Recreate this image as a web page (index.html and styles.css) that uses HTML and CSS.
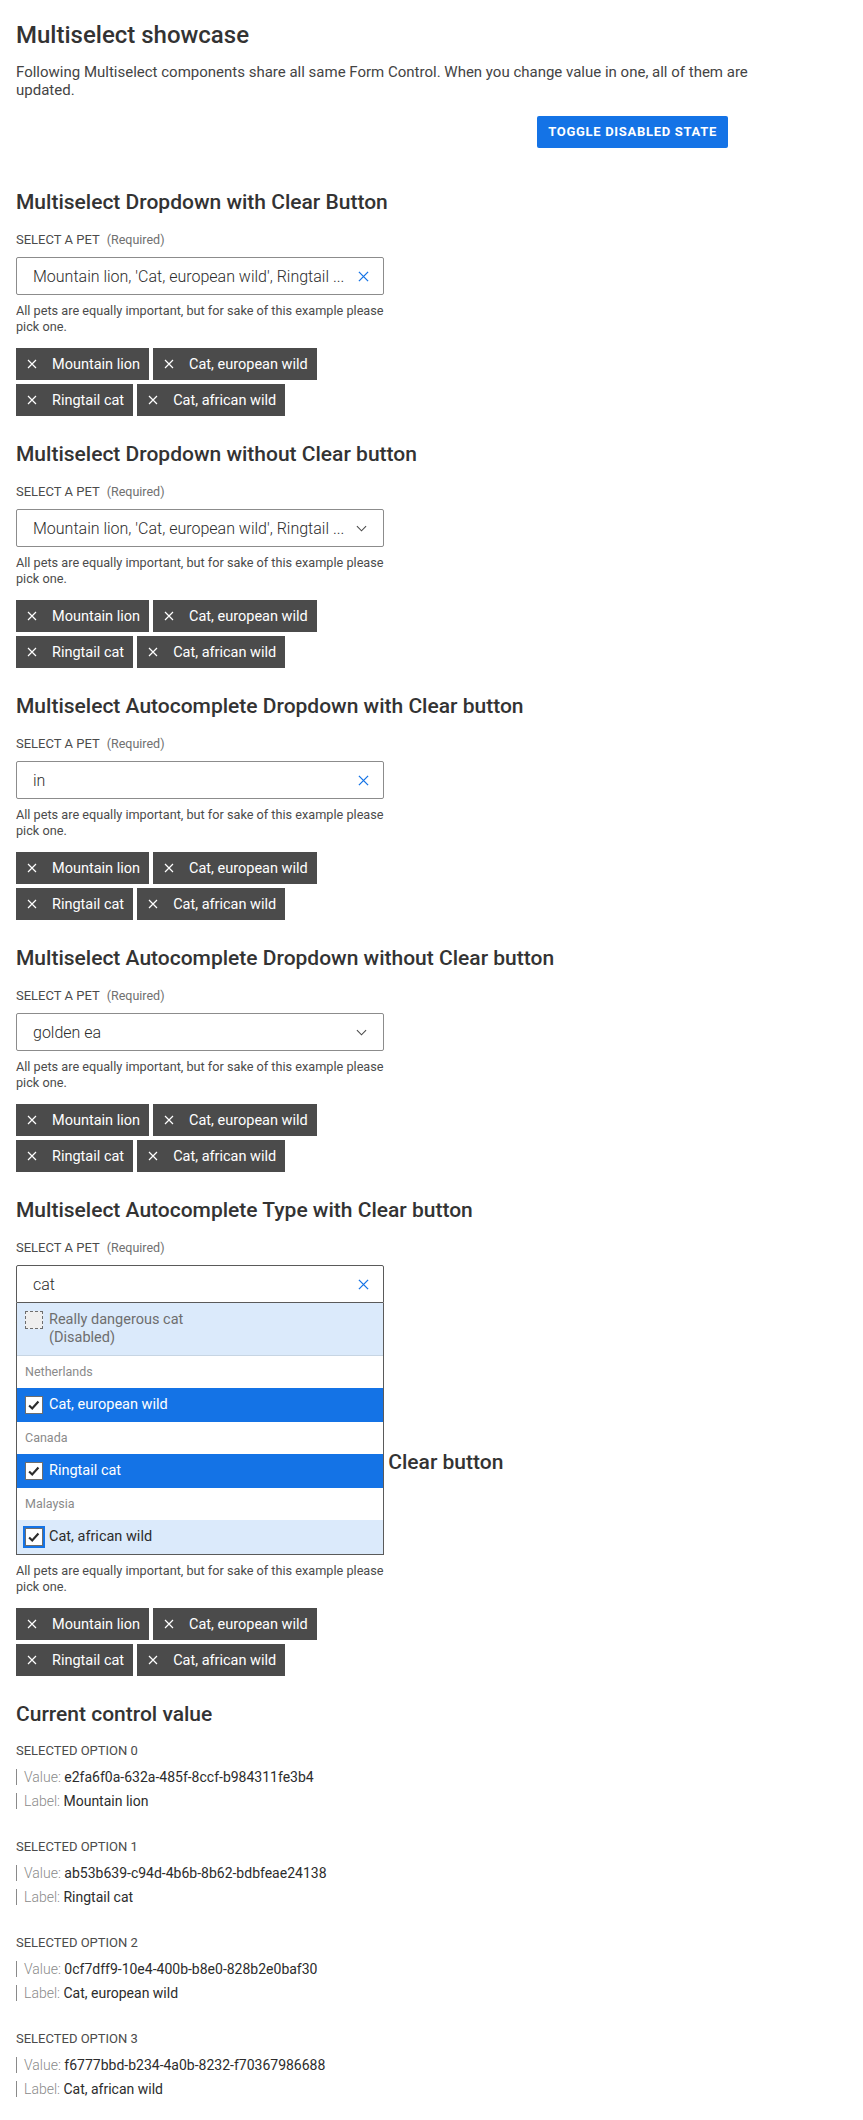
FILE: index.html
```html
<!DOCTYPE html>
<html lang="en">
<head>
<meta charset="utf-8">
<title>Multiselect showcase</title>
<link rel="stylesheet" href="styles.css">
</head>
<body>
<main class="page">
  <h1 class="title">Multiselect showcase</h1>
  <p class="intro">Following Multiselect components share all same Form Control. When you change value in one, all of them are updated.</p>
  <div class="toolbar"><button class="btn-primary" type="button">TOGGLE DISABLED STATE</button></div>

  <div class="demos">
    <section class="demo">
      <h2 class="demo-title">Multiselect Dropdown with Clear Button</h2>
      <div class="field">
        <div class="field-label"><span>SELECT A PET</span><span class="label-req">(Required)</span></div>
        <div class="control-wrap">
          <div class="control">
            <span class="control-value">Mountain lion, 'Cat, european wild', Ringtail ...</span>
            <svg class="icon-clear" viewBox="0 0 12 12"><path d="M1 1L11 11M11 1L1 11"/></svg>
          </div>
        </div>
        <p class="helper">All pets are equally important, but for sake of this example please pick one.</p>
      </div>
      <ul class="chips">
        <li class="chip"><svg class="chip-x" viewBox="0 0 10 10"><path d="M1 1L9 9M9 1L1 9"/></svg>Mountain lion</li>
        <li class="chip"><svg class="chip-x" viewBox="0 0 10 10"><path d="M1 1L9 9M9 1L1 9"/></svg>Cat, european wild</li>
        <li class="chip"><svg class="chip-x" viewBox="0 0 10 10"><path d="M1 1L9 9M9 1L1 9"/></svg>Ringtail cat</li>
        <li class="chip"><svg class="chip-x" viewBox="0 0 10 10"><path d="M1 1L9 9M9 1L1 9"/></svg>Cat, african wild</li>
      </ul>
    </section>

    <section class="demo">
      <h2 class="demo-title">Multiselect Dropdown without Clear button</h2>
      <div class="field">
        <div class="field-label"><span>SELECT A PET</span><span class="label-req">(Required)</span></div>
        <div class="control-wrap">
          <div class="control">
            <span class="control-value">Mountain lion, 'Cat, european wild', Ringtail ...</span>
            <svg class="icon-chevron" viewBox="0 0 12 7"><path d="M1 1l5 5 5-5"/></svg>
          </div>
        </div>
        <p class="helper">All pets are equally important, but for sake of this example please pick one.</p>
      </div>
      <ul class="chips">
        <li class="chip"><svg class="chip-x" viewBox="0 0 10 10"><path d="M1 1L9 9M9 1L1 9"/></svg>Mountain lion</li>
        <li class="chip"><svg class="chip-x" viewBox="0 0 10 10"><path d="M1 1L9 9M9 1L1 9"/></svg>Cat, european wild</li>
        <li class="chip"><svg class="chip-x" viewBox="0 0 10 10"><path d="M1 1L9 9M9 1L1 9"/></svg>Ringtail cat</li>
        <li class="chip"><svg class="chip-x" viewBox="0 0 10 10"><path d="M1 1L9 9M9 1L1 9"/></svg>Cat, african wild</li>
      </ul>
    </section>

    <section class="demo">
      <h2 class="demo-title">Multiselect Autocomplete Dropdown with Clear button</h2>
      <div class="field">
        <div class="field-label"><span>SELECT A PET</span><span class="label-req">(Required)</span></div>
        <div class="control-wrap">
          <div class="control">
            <span class="control-value">in</span>
            <svg class="icon-clear" viewBox="0 0 12 12"><path d="M1 1L11 11M11 1L1 11"/></svg>
          </div>
        </div>
        <p class="helper">All pets are equally important, but for sake of this example please pick one.</p>
      </div>
      <ul class="chips">
        <li class="chip"><svg class="chip-x" viewBox="0 0 10 10"><path d="M1 1L9 9M9 1L1 9"/></svg>Mountain lion</li>
        <li class="chip"><svg class="chip-x" viewBox="0 0 10 10"><path d="M1 1L9 9M9 1L1 9"/></svg>Cat, european wild</li>
        <li class="chip"><svg class="chip-x" viewBox="0 0 10 10"><path d="M1 1L9 9M9 1L1 9"/></svg>Ringtail cat</li>
        <li class="chip"><svg class="chip-x" viewBox="0 0 10 10"><path d="M1 1L9 9M9 1L1 9"/></svg>Cat, african wild</li>
      </ul>
    </section>

    <section class="demo">
      <h2 class="demo-title">Multiselect Autocomplete Dropdown without Clear button</h2>
      <div class="field">
        <div class="field-label"><span>SELECT A PET</span><span class="label-req">(Required)</span></div>
        <div class="control-wrap">
          <div class="control">
            <span class="control-value">golden ea</span>
            <svg class="icon-chevron" viewBox="0 0 12 7"><path d="M1 1l5 5 5-5"/></svg>
          </div>
        </div>
        <p class="helper">All pets are equally important, but for sake of this example please pick one.</p>
      </div>
      <ul class="chips">
        <li class="chip"><svg class="chip-x" viewBox="0 0 10 10"><path d="M1 1L9 9M9 1L1 9"/></svg>Mountain lion</li>
        <li class="chip"><svg class="chip-x" viewBox="0 0 10 10"><path d="M1 1L9 9M9 1L1 9"/></svg>Cat, european wild</li>
        <li class="chip"><svg class="chip-x" viewBox="0 0 10 10"><path d="M1 1L9 9M9 1L1 9"/></svg>Ringtail cat</li>
        <li class="chip"><svg class="chip-x" viewBox="0 0 10 10"><path d="M1 1L9 9M9 1L1 9"/></svg>Cat, african wild</li>
      </ul>
    </section>

    <section class="demo demo-open">
      <h2 class="demo-title">Multiselect Autocomplete Type with Clear button</h2>
      <div class="field">
        <div class="field-label"><span>SELECT A PET</span><span class="label-req">(Required)</span></div>
        <div class="control-wrap">
          <div class="control control-focus">
            <span class="control-value">cat</span>
            <svg class="icon-clear" viewBox="0 0 12 12"><path d="M1 1L11 11M11 1L1 11"/></svg>
          </div>
          <div class="panel">
            <div class="opt opt-disabled">
              <span class="box box-dashed"></span>
              <span class="opt-text">Really dangerous cat<br>(Disabled)</span>
            </div>
            <div class="group">Netherlands</div>
            <div class="opt opt-selected">
              <span class="box"><svg class="check" viewBox="0 0 18 18"><path d="M3.5 9.5l3.5 3.5 7-8"/></svg></span>
              <span class="opt-text">Cat, european wild</span>
            </div>
            <div class="group">Canada</div>
            <div class="opt opt-selected">
              <span class="box"><svg class="check" viewBox="0 0 18 18"><path d="M3.5 9.5l3.5 3.5 7-8"/></svg></span>
              <span class="opt-text">Ringtail cat</span>
            </div>
            <div class="group">Malaysia</div>
            <div class="opt opt-active">
              <span class="box box-focus"><svg class="check" viewBox="0 0 18 18"><path d="M3.5 9.5l3.5 3.5 7-8"/></svg></span>
              <span class="opt-text">Cat, african wild</span>
            </div>
          </div>
        </div>
        <p class="helper">All pets are equally important, but for sake of this example please pick one.</p>
      </div>
      <ul class="chips">
        <li class="chip"><svg class="chip-x" viewBox="0 0 10 10"><path d="M1 1L9 9M9 1L1 9"/></svg>Mountain lion</li>
        <li class="chip"><svg class="chip-x" viewBox="0 0 10 10"><path d="M1 1L9 9M9 1L1 9"/></svg>Cat, european wild</li>
        <li class="chip"><svg class="chip-x" viewBox="0 0 10 10"><path d="M1 1L9 9M9 1L1 9"/></svg>Ringtail cat</li>
        <li class="chip"><svg class="chip-x" viewBox="0 0 10 10"><path d="M1 1L9 9M9 1L1 9"/></svg>Cat, african wild</li>
      </ul>
    </section>

    <section class="demo">
      <h2 class="demo-title">Multiselect Autocomplete Type without Clear button</h2>
      <div class="field">
        <div class="field-label"><span>SELECT A PET</span><span class="label-req">(Required)</span></div>
        <div class="control-wrap">
          <div class="control">
            <span class="control-value"></span>
            <svg class="icon-chevron" viewBox="0 0 12 7"><path d="M1 1l5 5 5-5"/></svg>
          </div>
        </div>
        <p class="helper">All pets are equally important, but for sake of this example please pick one.</p>
      </div>
      <ul class="chips">
        <li class="chip"><svg class="chip-x" viewBox="0 0 10 10"><path d="M1 1L9 9M9 1L1 9"/></svg>Mountain lion</li>
        <li class="chip"><svg class="chip-x" viewBox="0 0 10 10"><path d="M1 1L9 9M9 1L1 9"/></svg>Cat, european wild</li>
        <li class="chip"><svg class="chip-x" viewBox="0 0 10 10"><path d="M1 1L9 9M9 1L1 9"/></svg>Ringtail cat</li>
        <li class="chip"><svg class="chip-x" viewBox="0 0 10 10"><path d="M1 1L9 9M9 1L1 9"/></svg>Cat, african wild</li>
      </ul>
    </section>
  </div>

  <section class="current">
    <h2 class="demo-title">Current control value</h2>
    <div class="opt-block">
      <div class="opt-title">SELECTED OPTION 0</div>
      <div class="kv"><span class="kv-key">Value:</span> e2fa6f0a-632a-485f-8ccf-b984311fe3b4</div>
      <div class="kv"><span class="kv-key">Label:</span> Mountain lion</div>
    </div>
    <div class="opt-block">
      <div class="opt-title">SELECTED OPTION 1</div>
      <div class="kv"><span class="kv-key">Value:</span> ab53b639-c94d-4b6b-8b62-bdbfeae24138</div>
      <div class="kv"><span class="kv-key">Label:</span> Ringtail cat</div>
    </div>
    <div class="opt-block">
      <div class="opt-title">SELECTED OPTION 2</div>
      <div class="kv"><span class="kv-key">Value:</span> 0cf7dff9-10e4-400b-b8e0-828b2e0baf30</div>
      <div class="kv"><span class="kv-key">Label:</span> Cat, european wild</div>
    </div>
    <div class="opt-block">
      <div class="opt-title">SELECTED OPTION 3</div>
      <div class="kv"><span class="kv-key">Value:</span> f6777bbd-b234-4a0b-8232-f70367986688</div>
      <div class="kv"><span class="kv-key">Label:</span> Cat, african wild</div>
    </div>
  </section>
</main>
</body>
</html>
```

FILE: styles.css
```css
* { box-sizing: border-box; }

body {
  margin: 0;
  background: #fff;
  color: #2c2c2c;
  font-family: Roboto, "Liberation Sans", sans-serif;
}

.page {
  padding: 0 16px 20px;
}

.title {
  margin: 19px 0 0;
  font-size: 24px;
  line-height: 32px;
  font-weight: 500;
  color: #333;
}

.intro {
  margin: 12px 0 0;
  max-width: 760px;
  font-size: 15px;
  line-height: 18px;
  color: #444;
}

.toolbar {
  display: flex;
  justify-content: flex-end;
  width: 712px;
  margin-top: 17px;
}

.btn-primary {
  height: 32px;
  padding: 0 11px;
  border: 0;
  border-radius: 2px;
  background: #1473e6;
  color: #fff;
  font-family: Roboto, "Liberation Sans", sans-serif;
  font-size: 13px;
  font-weight: 700;
  line-height: 32px;
  letter-spacing: .7px;
}

.demos {
  margin-top: 42px;
}

.demo {
  margin-bottom: 26px;
}

.demo-title {
  margin: 0 0 16px;
  font-size: 21px;
  line-height: 24px;
  font-weight: 500;
  color: #333;
}

.field {
  width: 368px;
}

.field-label {
  display: flex;
  align-items: baseline;
  gap: 7px;
  height: 20px;
  margin-bottom: 7px;
  font-size: 13px;
  line-height: 20px;
  color: #4b4b4b;
}

.label-req {
  font-size: 12.5px;
  color: #707070;
}

.control-wrap {
  position: relative;
}

.control {
  display: flex;
  align-items: center;
  gap: 8px;
  height: 38px;
  padding: 0 14px 0 16px;
  border: 1px solid #8c8c8c;
  border-radius: 2px;
  background: #fff;
}

.control-focus {
  border-color: #5a5a5a;
  border-radius: 2px 2px 0 0;
}

.control-value {
  flex: 1;
  min-width: 0;
  overflow: hidden;
  white-space: nowrap;
  font-size: 16px;
  font-weight: 300;
  color: #2c2c2c;
}

.icon-clear {
  width: 11px;
  height: 11px;
  fill: none;
  stroke: #1473e6;
  stroke-width: 1.4;
}

.icon-chevron {
  width: 11px;
  height: 7px;
  margin-right: 2px;
  fill: none;
  stroke: #4b4b4b;
  stroke-width: 1.2;
}

.helper {
  margin: 8px 0 0;
  font-size: 12.7px;
  line-height: 16px;
  color: #4b4b4b;
}

.chips {
  display: flex;
  flex-wrap: wrap;
  gap: 4px;
  width: 368px;
  margin: 13px 0 0;
  padding: 0;
  list-style: none;
}

.chip {
  display: flex;
  align-items: center;
  gap: 15px;
  height: 32px;
  padding: 0 9px 0 11px;
  background: #4b4b4b;
  color: #fff;
  font-size: 14.5px;
}

.chip-x {
  width: 10px;
  height: 10px;
  fill: none;
  stroke: #fff;
  stroke-width: 1.2;
}

/* open dropdown panel */
.panel {
  position: absolute;
  top: 100%;
  left: 0;
  right: 0;
  z-index: 10;
  background: #fff;
  border: 1px solid #5a5a5a;
  border-top: 0;
}

.opt {
  display: flex;
  align-items: flex-start;
  gap: 6px;
  padding: 8px 8px;
  font-size: 14.5px;
  line-height: 18px;
}

.opt-disabled {
  background: #dbeafb;
  color: #6e6e6e;
  border-bottom: 1px solid #c7d5e3;
}

.opt-selected {
  background: #1473e6;
  color: #fff;
}

.opt-active {
  background: #dbeafb;
  color: #2c2c2c;
}

.group {
  display: flex;
  align-items: center;
  height: 32px;
  padding: 0 8px;
  font-size: 12.5px;
  line-height: 16px;
  color: #8a8a8a;
  background: #fff;
}

.box {
  flex: none;
  display: flex;
  align-items: center;
  justify-content: center;
  width: 18px;
  height: 18px;
  border: 1px solid #6e6e6e;
  background: #fff;
}

.box-dashed {
  border-style: dashed;
  background: #efefef;
}

.box-focus {
  box-shadow: 0 0 0 2px #1473e6;
}

.check {
  width: 16px;
  height: 16px;
  fill: none;
  stroke: #2c2c2c;
  stroke-width: 2.4;
}

/* current value */
.current {
  margin-top: 1px;
}

.current .demo-title {
  margin-bottom: 16px;
}

.opt-block + .opt-block {
  margin-top: 29px;
}

.opt-title {
  font-size: 13px;
  line-height: 18px;
  color: #4b4b4b;
}

.kv {
  margin-top: 8px;
  padding-left: 7px;
  border-left: 1px solid #8a8a8a;
  font-size: 14px;
  line-height: 16px;
  color: #2c2c2c;
}

.opt-title + .kv {
  margin-top: 9px;
}

.kv-key {
  color: #8a8a8a;
  font-weight: 300;
}
```
